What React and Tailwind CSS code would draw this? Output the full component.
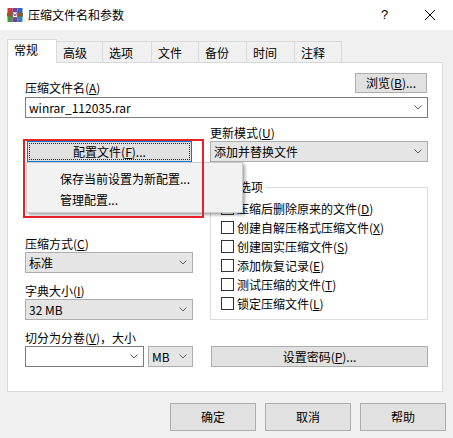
import React from "react";

const Chevron = () => (
  <svg width="8" height="5" viewBox="0 0 8 5" className="shrink-0">
    <path d="M0.5 0.5 L4 4 L7.5 0.5" fill="none" stroke="#606060" strokeWidth="1" />
  </svg>
);

function Combo({ text, className = "", white }) {
  return (
    <div
      className={`h-[21px] flex items-center justify-between pl-[3px] pr-[5px] border ${
        white ? "bg-white border-[#7a7a7a]" : "bg-[#e5e5e5] border-[#adadad]"
      } ${className}`}
    >
      <span className="leading-[16px] whitespace-nowrap">{text}</span>
      <Chevron />
    </div>
  );
}

function Btn({ children, className = "" }) {
  return (
    <div
      className={`flex items-center justify-center bg-[#e1e1e1] border border-[#adadad] leading-[16px] ${className}`}
    >
      {children}
    </div>
  );
}

function Check({ children }) {
  return (
    <div className="h-[19px] flex items-center">
      <div className="w-[13px] h-[13px] border border-[#333333] bg-white shrink-0" />
      <span className="ml-[3px] leading-[16px] whitespace-nowrap">{children}</span>
    </div>
  );
}

const Icon = () => (
  <svg width="16" height="16" viewBox="0 0 16 16">
    <rect x="0.5" y="1" width="5" height="7" fill="#d23a3f" />
    <rect x="0.5" y="8" width="5" height="7" fill="#3f9a3c" />
    <rect x="5.5" y="1" width="5" height="14" fill="#7b3f9e" />
    <rect x="10.5" y="1" width="5" height="7" fill="#3565c0" />
    <rect x="10.5" y="8" width="5" height="7" fill="#2f86b8" />
    <rect x="0" y="6" width="16" height="3.5" fill="#8a5a2a" />
    <rect x="5.5" y="5" width="5" height="5.5" fill="#ffffff" stroke="#5a3a1a" strokeWidth="0.6" />
    <path d="M6.5 6.2 L7.3 9 L8 7 L8.7 9 L9.5 6.2" fill="none" stroke="#7b3f9e" strokeWidth="0.7" />
  </svg>
);

const tabs = [
  { t: "高级", w: "w-[46px]" },
  { t: "选项", w: "w-[49px]" },
  { t: "文件", w: "w-[47px]" },
  { t: "备份", w: "w-[48px]" },
  { t: "时间", w: "w-[48px]" },
  { t: "注释", w: "w-[47px]" },
];

export default function App() {
  return (
    <div className="relative w-[453px] h-[438px] bg-[#f0f0f0] overflow-hidden text-[12px] text-black font-['Noto_Sans_CJK_SC',sans-serif] select-none">
      {/* Title bar */}
      <div className="h-[30px] bg-white flex items-center">
        <div className="pl-[7px] flex items-center">
          <Icon />
          <span className="ml-[5px] leading-[16px]">压缩文件名和参数</span>
        </div>
        <div className="ml-auto flex h-full">
          <div className="w-[45px] flex items-center justify-center text-[13px] font-['Liberation_Sans',sans-serif]">?</div>
          <div className="w-[46px] flex items-center justify-center">
            <svg width="10" height="10" viewBox="0 0 10 10">
              <path d="M0 0 L10 10 M10 0 L0 10" stroke="#000" strokeWidth="1" />
            </svg>
          </div>
        </div>
      </div>

      {/* Tabs */}
      <div className="mt-[9px] pl-[7px] flex items-end">
        <div className="relative z-10 w-[50px] h-[24px] mb-[-1px] bg-white border-l border-t border-r border-[#d9d9d9] pl-[6px] pt-[2px] leading-[16px]">
          常规
        </div>
        {tabs.map((tb) => (
          <div
            key={tb.t}
            className={`${tb.w} h-[21px] border-t border-r border-[#d9d9d9] pl-[6px] pt-[3px] leading-[16px]`}
          >
            {tb.t}
          </div>
        ))}
      </div>

      {/* Panel */}
      <div className="ml-[7px] w-[436px] h-[330px] bg-white border border-[#d9d9d9] pl-[17px] pr-[14px] pt-[10px]">
        <div className="h-[20px] flex items-end justify-between">
          <span className="leading-[16px] mb-[-3px]">
            压缩文件名(<u>A</u>)
          </span>
          <Btn className="w-[72px] h-[20px] mr-[1px]">
            浏览(<u>B</u>)...
          </Btn>
        </div>
        <Combo white className="mt-[4px]" text="winrar_112035.rar" />

        <div className="mt-[7px] flex gap-[17px]">
          {/* Left column */}
          <div className="w-[168px] pt-[16px] flex flex-col">
            <div className="ml-[2px] w-[165px] h-[21px] bg-[#e1e1e1] border border-[#0078d7] p-[1px]">
              <div className="h-full border border-dotted border-[#222] flex items-center justify-center leading-[16px]">
                配置文件(<u>F</u>)...
              </div>
            </div>
            <span className="mt-[74px] leading-[16px]">
              压缩方式(<u>C</u>)
            </span>
            <Combo text="标准" />
            <span className="mt-[10px] leading-[16px]">
              字典大小(<u>I</u>)
            </span>
            <Combo text="32 MB" />
            <span className="mt-[10px] leading-[16px]">
              切分为分卷(<u>V</u>)，大小
            </span>
            <div className="flex gap-[4px]">
              <Combo white className="w-[119px]" text="" />
              <Combo className="w-[45px]" text="MB" />
            </div>
          </div>

          {/* Right column */}
          <div className="w-[218px] flex flex-col">
            <span className="leading-[16px]">
              更新模式(<u>U</u>)
            </span>
            <Combo text="添加并替换文件" />
            <fieldset className="mt-[17px] border border-[#dcdcdc] pl-[10px] pt-[4px] pb-[6px]">
              <legend className="ml-[-8px] px-[2px] leading-[16px]">压缩选项</legend>
              <Check>压缩后删除原来的文件(<u>D</u>)</Check>
              <Check>创建自解压格式压缩文件(<u>X</u>)</Check>
              <Check>创建固实压缩文件(<u>S</u>)</Check>
              <Check>添加恢复记录(<u>E</u>)</Check>
              <Check>测试压缩的文件(<u>T</u>)</Check>
              <Check>锁定压缩文件(<u>L</u>)</Check>
            </fieldset>
            <Btn className="mt-[26px] h-[21px] ml-[1px]">
              设置密码(<u>P</u>)...
            </Btn>
          </div>
        </div>
      </div>

      {/* Bottom buttons */}
      <div className="mt-[11px] flex justify-end gap-[9px] pr-[7px]">
        <Btn className="w-[86px] h-[28px]">确定</Btn>
        <Btn className="w-[86px] h-[28px]">取消</Btn>
        <Btn className="w-[86px] h-[28px]">帮助</Btn>
      </div>

      {/* Popup menu */}
      <div className="absolute left-[26px] top-[162px] w-[217px] h-[51px] bg-[#f2f2f2] border border-[#cccccc] shadow-[2px_2px_3px_rgba(0,0,0,0.35)] pt-[5px] z-20">
        <div className="h-[21px] flex items-center pl-[33px] leading-[16px]">保存当前设置为新配置...</div>
        <div className="h-[21px] flex items-center pl-[33px] leading-[16px]">管理配置...</div>
      </div>

      {/* Red highlight */}
      <div className="absolute left-[23px] top-[139px] w-[181px] h-[79px] border-2 border-[#e6212a] z-30" />
    </div>
  );
}
